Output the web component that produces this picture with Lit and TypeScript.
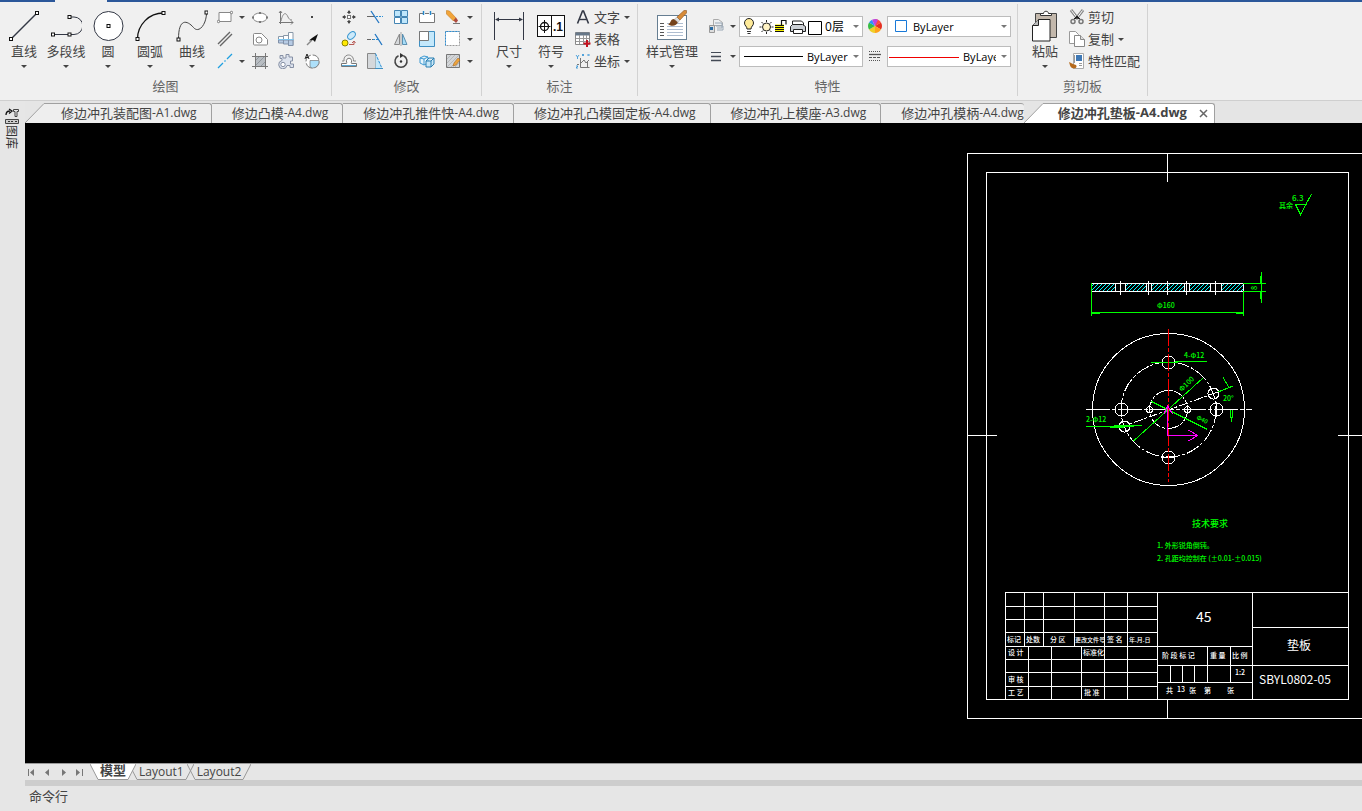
import { LitElement, html, svg, css, SVGTemplateResult, TemplateResult } from "lit";
import { customElement, property, state } from "lit/decorators.js";
import { classMap } from "lit/directives/class-map.js";

const INK = "#333845";
const node = (x: number, y: number) =>
  svg`<rect x=${x - 1.5} y=${y - 1.5} width="3" height="3" fill="#fff" stroke="#111" stroke-width="1" />`;

/* 32 x 32 glyphs of the large buttons */
const LARGE: Record<string, SVGTemplateResult> = {
  line: svg`<path d="M3.5 28.5L29.5 2.5" stroke=${INK} stroke-width="1.5" />${node(3, 29)}${node(29, 3)}`,
  polyline: svg`<path d="M3 24h17M20 6.500h4a8.500 8.500 0 0 1 0 17.500h-4" transform="translate(0 .5)" stroke=${INK} />${node(3, 24.5)}${node(19.5, 24.5)}${node(19.5, 7)}`,
  circle: svg`<circle cx="16.500" cy="16" r="14.500" fill="#fff" stroke=${INK} />${node(16.5, 16)}`,
  arc: svg`<path d="M3.500 29A26 26 0 0 1 29.500 3" stroke="#111" stroke-width="1.3" />${node(3.5, 29)}${node(29.5, 3)}`,
  curve: svg`<path d="M2.500 29C2.500 8 11 10 17.500 17.500C23 24 30.500 14 30.500 3" stroke="#444" />${node(2.5, 29.500)}${node(30.5, 2.5)}`,
  dimension: svg`<path d="M1.500 2v28M30.500 2v28M3 9.500h26" stroke=${INK} /><path d="M2 9.500l4-2v4zM30 9.500l-4-2v4z" fill=${INK} />`,
  symbol: svg`<rect x="2.500" y="5.500" width="27" height="21" fill="#fff" stroke="#111" /><path d="M16.500 5v22M3.500 16.500h12M9.500 10v13" stroke="#111" /><circle cx="9.500" cy="16.500" r="4" stroke="#111" stroke-width="1.3" /><text x="18" y="21" class="glyph">.1</text>`,
  style: svg`<rect x="1.500" y="5.500" width="29" height="24" fill="#fff" stroke="#667e92" /><path d="M4 13.500h4M4 16.500h4M4 19.500h4M4 22.500h4M4 25.500h4" stroke="#555" /><path d="M11 13.500h16M11 16.500h16M11 19.500h16M11 22.500h16M11 25.500h16" stroke="#aebdd0" /><path d="M12 14c3 0 2-5 6-5l4 3c-1 4-7 5-10 2z" fill="#74421b" /><path d="M18.500 9l2.500-2 3 3-2 2.500z" fill="#ddd" stroke="#888" stroke-width=".4" /><path d="M21 7l7-6.500h2.500v2.500l-6.500 7z" fill="#d78b38" stroke="#8c5422" stroke-width=".6" />`,
  paste: svg`<path d="M6.500 3.500h21v24h-21z" fill="#c3b8ac" stroke="#444" /><path d="M11.500 5.500v-2h3c0-3 5-3 5 0h3v2z" fill="#fff" stroke="#333" /><path d="M3.500 15.500l6-6h11.500v21.500h-17.500z" fill="#fff" stroke="#222" /><path d="M3.500 15.500h6v-6" fill="#bbb" stroke="#222" />`,
};

/* 16 x 16 glyphs */
const SMALL: Record<string, SVGTemplateResult> = {
  rect: svg`<path d="M2 3.500h12v9h-12z" fill="#fff" stroke="#888" /><circle cx="1.500" cy="12.500" r="1.200" fill="#fff" stroke="#777" /><circle cx="14.500" cy="3.500" r="1.200" fill="#fff" stroke="#777" />`,
  ellipse: svg`<ellipse cx="8" cy="8.500" rx="7" ry="4.500" fill="#fff" stroke="#888" /><path d="M7 3h2v2h-2zM7 12h2v2h-2zM0 7.500h2v2h-2zM14 7.500h2v2h-2z" fill="#777" />`,
  plot: svg`<path d="M2.500 2v13M1 13.500h14M13 11.500l2 2-2 2M1 4l1.500-2L4 4" stroke="#777" /><path d="M3 12c2-9 5-9 7-4 1 2 2 3 4 3" stroke="#888" />`,
  point: svg`<rect x="7" y="7" width="2" height="2" fill="#444" />`,
  double: svg`<path d="M1 13L13 1M3 15L15 3" stroke="#666" stroke-width="1.400" />`,
  hole: svg`<path d="M1.500 3.500q0-1 1-1h7l6 6v4.500q0 1-1 1h-12q-1 0-1-1z" fill="#fff" stroke="#888" /><circle cx="7" cy="9" r="3" stroke="#888" />`,
  screw: svg`<path d="M.500 5.500h5v6h-5zM5.500 4.500h5v8h-5zM10.500 1.500h4.500v13h-4.500z" fill="#fff" stroke="#8998a8" /><path d="M.500 9h5v3h-5zM5.500 9h5v4h-5zM10.500 9h4.500v5.500h-4.500z" fill="#b7cbe4" stroke="#8090a8" /><path d="M0 8.500h16" stroke="#7cc4ee" />`,
  arrow: svg`<path d="M3 14l5-5" stroke="#888" stroke-width="1.500" /><path d="M14 3l-3 8-2-2-4 .500 3-2.500z" fill="#111" />`,
  center: svg`<path d="M1 15l5-5M7.500 8.500l1-1M10 6l5-5" stroke="#1e9fe0" stroke-width="1.300" />`,
  hatch: svg`<path d="M3 3h11v11h-11z" fill="#b8bdc2" /><path d="M3 8l5-5M3 13l10-10M8 14l6-6" stroke="#92989e" /><path d="M3.500 0v16M13.500 0v16M0 3.500h16M0 13.500h16" stroke="#777" />`,
  parts: svg`<path d="M2 2.500h3v2.500h3v-3.500h3v2.500h3.500v4h-2v3h3v3.500h-3.500v-2h-3a4.200 4.200 0 1 1-5-5v-2h-2z" fill="#dde3ee" stroke="#8690a5" /><circle cx="5" cy="11.500" r="2.200" fill="#fff" stroke="#8690a5" />`,
  region: svg`<circle cx="8.500" cy="8.500" r="6.500" fill="#fff" stroke="#777" stroke-dasharray="8 2" /><path d="M6 7.500h9a6.500 6.500 0 0 1-6.500 7.500q-2.500 0-2.500-2z" fill="#ade0fa" stroke="#777" stroke-width=".7" /><path d="M1 6l2-5 2 5M2 4.500h2" stroke="#222" />`,
  move: svg`<path d="M8 2v3M8 11v3M2 8h3M11 8h3" stroke="#555" stroke-width="1.300" /><path d="M8 1l2 3h-4zM8 15l2-3h-4zM1 8l3-2v4zM15 8l-3-2v4z" fill="#444" /><rect x="6.500" y="6.500" width="3" height="3" fill="#fff" stroke="#777" />`,
  trim: svg`<path d="M0 7.500h8" stroke="#666" /><path d="M9 7.500h7" stroke="#2a8fd6" stroke-dasharray="2 1" /><path d="M4 2l8 12" stroke="#2075c2" stroke-width="1.300" />`,
  array: svg`<path d="M1.500 1.500h6v6h-6zM8.500 1.500h6v6h-6zM8.500 8.500h6v6h-6z" fill="#bfe6fb" stroke="#4485b3" /><path d="M1.500 8.500h6v6h-6z" fill="#fff" stroke="#4485b3" />`,
  breaks: svg`<path d="M4 4.500h-3.500v9h15v-9h-3M6 4.500h4" fill="#fff" stroke="#777" /><path d="M4.500 2v4M11.500 2v4" stroke="#2287cc" stroke-width="1.400" />`,
  pencil: svg`<path d="M1.500 1.500l3 .5 6.500 7-2.500 3-7-7z" fill="#f2a53a" stroke="#c57b1c" stroke-width=".6" /><path d="M8.500 11.500l2.500-3 2 3-2 2.500z" fill="#ad4b3f" /><path d="M8 14.500h7" stroke="#777" />`,
  copyobj: svg`<circle cx="4" cy="12" r="3" fill="#ffe900" stroke="#8d8200" /><ellipse cx="10.500" cy="4.500" rx="4.500" ry="3" transform="rotate(-45 10.500 4.500)" fill="#cdeafa" stroke="#3f9ad2" /><path d="M8 13.500h5v-3M11 12l2-2 1.500 2" stroke="#b75b56" />`,
  extend: svg`<path d="M0 8.500h6" stroke="#666" stroke-dasharray="4 1" /><path d="M6 8.500h5" stroke="#2a8fd6" stroke-dasharray="2 1" /><path d="M8 3l7 11" stroke="#2075c2" stroke-width="1.300" />`,
  mirror: svg`<path d="M6.500 3v10.500h-5z" fill="#d6d9dc" stroke="#888" /><path d="M9.500 3v10.500h4.500z" fill="#a6dcf8" stroke="#5a8fb0" /><path d="M8 1v14" stroke="#777" stroke-width=".6" />`,
  scale: svg`<path d="M.500.500h15v15h-15z" fill="#c4e8fb" stroke="#3f8fc2" /><path d="M.500 .500h9v9h-9z" fill="#fff" stroke="#777" />`,
  stretch: svg`<path d="M.500.500h14v14h-14z" fill="#fff" stroke="#999" stroke-dasharray="2 1" /><path d="M.500 14.500v-14h14" stroke="#2a8fd6" stroke-dasharray="2 1" />`,
  offset: svg`<path d="M.500 10.500h4.500c1 0 1-.500.500-1.500-1-5 6-5 5 0-.5 1-.5 1.500.500 1.500h4.500v3h-15z" fill="#fff" stroke="#777" /><path d="M1 8h2c-1-8 10-8 9.500 0h2.500" stroke="#888" /><path d="M1 12.500h14" stroke="#5aa8d6" />`,
  chamfer: svg`<path d="M.500.500h8v15h-8z" fill="#d5d8db" stroke="#888" /><path d="M8.500.500l6 15h-6z" fill="#c3e7fa" /><path d="M8.500 .500l6.500 15" stroke="#2a8fd6" stroke-dasharray="3 1" /><path d="M8 15.500h8" stroke="#3f8fc2" />`,
  rotate: svg`<path d="M5.500 2.800a6 6 0 1 0 5 0" stroke="#444" stroke-width="1.500" /><path d="M7 0v5l4-2.500z" fill="#333" /><circle cx="8" cy="8.500" r="1.200" fill="#333" />`,
  explode: svg`<path d="M1 5l4-2 4 1v6l-4 2-4-2zM1 5l4 1 4-2M5 6v6" fill="#e7f5fc" stroke="#3f9ad2" /><path d="M7 8l3-3h5v6l-3 3h-5zM7 8h5l3-3M12 8v6" fill="#c8e8f8" stroke="#2a7fb2" />`,
  edithatch: svg`<path d="M1.500 1.500h13v13h-13z" fill="#d3d6d9" stroke="#777" /><path d="M2 6l4-4M2 10l8-8M2 14l12-12M6 14l8-8M10 14l4-4" stroke="#aaa" stroke-width=".7" /><path d="M8 13l1-3 4-5 2 2-4 5z" fill="#eda43d" stroke="#a76a24" stroke-width=".6" />`,
  text: svg`<path d="M2.500 14.500L7.500 2h1l5 12.500" stroke="#333845" stroke-width="1.600" /><path d="M4.500 10.500h7" stroke="#333845" stroke-width="1.400" />`,
  table: svg`<path d="M.500 1.500h14v12h-14z" fill="#fff" stroke="#888" /><path d="M.500 1.500h14v3h-14z" fill="#667788" /><path d="M1 7.500h13M1 10.500h13M4.500 4v9M8.500 4v9M11.500 4v9" stroke="#999" /><path d="M12 9v7M8.500 12.500h7" stroke="#c4121f" stroke-width="2" />`,
  coord: svg`<path d="M5.500 5v9.500h9M2 11.500h2M6 10l3-3 2 3 3-3M12.500 8v6" stroke="#777" /><path d="M1 2l1.500 2L4 2M2.500 4v2M7 1l2 2M9 1l-2 2M12.500 1l2 2M14.500 1l-2 2M1 13h2l-2 2h2" stroke="#2a8fd6" stroke-width=".8" />`,
  convert: svg`<path d="M5.500 5v-3.500h5l4 3v3h-9z" fill="#eceff2" stroke="#aaa" /><path d="M7 5h7v5h-5M8 8h7v4h-6" stroke="#9aa8b6" /><path d="M1.500 7.500h5v7h-5z" fill="#ddd" stroke="#999" /><path d="M2 9h3v3h-3z" fill="#286aa3" />`,
  weight: svg`<path d="M3 4.500h10" stroke="#444a55" /><path d="M3 8.500h10M3 12.500h10" stroke="#444a55" stroke-width="1.500" />`,
  wheel: svg`<path d="M8 8V1a7 7 0 0 1 6 3.500z" fill="#ff4a42" /><path d="M8 8l6-3.500a7 7 0 0 1 0 7z" fill="#e53123" /><path d="M8 8l6 3.500a7 7 0 0 1-6 3.500z" fill="#ffa21b" /><path d="M8 8v7a7 7 0 0 1-6-3.500z" fill="#f0cf27" /><path d="M8 8l-6 3.500a7 7 0 0 1 0-7z" fill="#38bd45" /><path d="M8 8L2 4.500A7 7 0 0 1 5 1.700z" fill="#2d8fff" /><path d="M8 8L5 1.700A7 7 0 0 1 11 1.700z" fill="#bc48e0" />`,
  linetype: svg`<path d="M2 3.500h12M2 12.500h12" stroke="#555" stroke-dasharray="1 1" /><path d="M2 6.500h12" stroke="#555" stroke-width="1.300" /><path d="M2 9.500h12" stroke="#555" stroke-dasharray="3 1" />`,
  cut: svg`<path d="M2 1l7 9M14 1l-7 9" stroke="#888" stroke-width="3" /><path d="M2.500 1.500l6 8M13.500 1.500l-6 8" stroke="#fff" /><path d="M8 7l3 3-3-1-3 1z" fill="#222" stroke="#222" /><circle cx="4" cy="12.500" r="2" stroke="#777" stroke-width="1.500" /><circle cx="12" cy="12.500" r="2" stroke="#777" stroke-width="1.500" />`,
  copy: svg`<path d="M.500.500h6l3 3v9h-9z" fill="#fff" stroke="#999" /><path d="M5.500 4.500h6l4 4v7h-10z" fill="#fff" stroke="#888" /><path d="M11.500 4.500v4h4" stroke="#888" fill="#ddd" />`,
  match: svg`<path d="M4.500.500h10v15h-10z" fill="#fff" stroke="#aaa" /><path d="M7 2h6v6h-6z" fill="#3f78b5" /><path d="M5.500 2v8M10 10.500h3M10 12.500h3" stroke="#999" /><path d="M0 9l4 2 3 1c2 3-2 4-4 3-2-1-2-3-3-6z" fill="#b56a1d" />`,
};

const small = (name: string) => html`<svg class="i16" viewBox="0 0 16 16" fill="none" aria-hidden="true">${SMALL[name]}</svg>`;
const caret = html`<span class="caret"></span>`;

const DRAW_TOOLS = [["rect", "矩形", 1], ["ellipse", "椭圆"], ["plot", "函数曲线"], ["point", "点"], ["double", "平行线"], ["hole", "孔"], ["screw", "螺纹"], ["arrow", "箭头"], ["center", "中心线", 1], ["hatch", "填充"], ["parts", "零件"], ["region", "局部视图"]];
const EDIT_TOOLS = [["move", "移动"], ["trim", "修剪"], ["array", "阵列"], ["breaks", "打断"], ["pencil", "删除", 1], ["copyobj", "复制"], ["extend", "延伸"], ["mirror", "镜像"], ["scale", "缩放"], ["stretch", "拉伸", 1], ["offset", "偏移"], ["chamfer", "倒角"], ["rotate", "旋转"], ["explode", "分解"], ["edithatch", "编辑填充", 1]];

@customElement("cad-ribbon")
class CadRibbon extends LitElement {
  static styles = css`
    :host { display: block; background: #f0f0f0; border-bottom: 1px solid #cfcfcf; color: #444; font: 13px/20px "Noto Sans CJK SC", "Noto Sans", sans-serif; }
    .strip { display: grid; grid-template-columns: 55px 52px 1fr; height: 2px; }
    .strip span { background: #2b579a; }
    .strip .open { background: #f0f0f0; }
    .groups { display: flex; padding: 2px 0 4px; }
    .group { display: flex; flex-direction: column; justify-content: space-between; height: 92px; border-right: 1px solid #d2d2d2; white-space: nowrap; }
    .body { display: flex; padding: 2px 6px 0; height: 66px; }
    .group:first-child .body { padding-left: 3px; }
    .title { margin: 0; text-align: center; color: #666; }
    button { display: block; border: 0; padding: 0; margin: 0; background: none; color: inherit; font: inherit; }
    svg { display: block; flex: none; }
    .i16 { width: 16px; height: 16px; }
    .i32 { width: 32px; height: 32px; }
    .glyph { font: bold 12px "Liberation Sans", sans-serif; fill: #111; }
    .big { width: 42px; display: flex; flex-direction: column; align-items: center; padding-top: 4px; line-height: 18px; }
    .big .caret { margin-top: 5px; }
    .wide { width: 56px; }
    .caret { flex: none; width: 0; height: 0; border: 3px solid transparent; border-top-color: #444; border-bottom: 0; }
    .tools { display: grid; grid-template-rows: repeat(3, 22px); align-items: center; }
    .draw { grid-template-columns: 35px 26px 26px 21px; padding-left: 4px; }
    .edit { grid-template-columns: 26px 26px 26px 26px 30px; padding-left: 3px; }
    .tool { display: flex; align-items: center; gap: 6px; }
    .list { display: grid; grid-template-rows: repeat(3, 22px); align-items: center; padding: 0 1px 0 3px; }
    .list .tool { gap: 3px; }
    .list .caret { margin-left: 1px; }
    .props { display: grid; grid-template-columns: 31px 124px 24px 124px; grid-template-rows: 30px 30px; align-items: center; padding: 5px 0 0 8px; }
    .props .mid { justify-self: center; }
    .combo { position: relative; display: block; height: 21px; }
    .combo select { appearance: none; display: block; box-sizing: border-box; width: 100%; height: 100%; border: 1px solid #bcbcbc; border-radius: 0; background: #fff; color: #000; font: 11px "Open Sans", "Noto Sans CJK SC", sans-serif; margin: 0; padding: 0 14px 0 0; }
    .combo svg { position: absolute; inset: 0 auto 0 0; height: 21px; pointer-events: none; }
    .combo .caret { position: absolute; right: 4px; top: 9px; border-top-color: #777; pointer-events: none; }
    .combo .layer { padding-left: 85px; font-size: 12px; }
    .combo .color { padding-left: 25px; }
    .combo .width { padding-left: 67px; }
    .combo .type { padding-left: 75px; }
  `;

  big(icon: string, label: string, wide = false) {
    return html`<button class=${classMap({ big: true, wide })}>
      <svg class="i32" viewBox="0 0 32 32" fill="none" aria-hidden="true">${LARGE[icon]}</svg>${label}${caret}
    </button>`;
  }
  tool([icon, label, menu]: any[]) {
    return html`<button class="tool" aria-label=${label}>${small(icon)}${menu ? caret : ""}</button>`;
  }
  item(icon: string, label: string, menu = false) {
    return html`<button class="tool">${small(icon)}${label}${menu ? caret : ""}</button>`;
  }
  group(title: string, body: TemplateResult) {
    return html`<section class="group"><div class="body">${body}</div><p class="title">${title}</p></section>`;
  }
  combo(kind: string, label: string, value: string, art: SVGTemplateResult) {
    return html`<label class="combo"><select class=${kind} aria-label=${label}><option>${value}</option></select>
      <svg width="106" height="21" fill="none" aria-hidden="true">${art}</svg>${caret}</label>`;
  }

  render() {
    return html`
      <div class="strip"><span></span><span class="open"></span><span></span></div>
      <div class="groups">
        ${this.group("绘图", html`
          ${[["line", "直线"], ["polyline", "多段线"], ["circle", "圆"], ["arc", "圆弧"], ["curve", "曲线"]].map(([i, l]) => this.big(i, l))}
          <div class="tools draw">${DRAW_TOOLS.map((t) => this.tool(t))}</div>`)}
        ${this.group("修改", html`<div class="tools edit">${EDIT_TOOLS.map((t) => this.tool(t))}</div>`)}
        ${this.group("标注", html`
          ${this.big("dimension", "尺寸")}${this.big("symbol", "符号")}
          <div class="list">${this.item("text", "文字", true)}${this.item("table", "表格")}${this.item("coord", "坐标", true)}</div>`)}
        ${this.group("特性", html`
          ${this.big("style", "样式管理", true)}
          <div class="props">
            <button class="tool" aria-label="图层">${small("convert")}${caret}</button>
            ${this.combo("layer", "图层", "0层", svg`
              <path d="M8 13c0-3-2.500-3-2.500-6a4.500 4.500 0 0 1 9 0c0 3-2.500 3-2.500 6z" fill="#ffeb9a" stroke="#222" /><path d="M8 15.500h4M8.500 17.500h3" stroke="#333" />
              <circle cx="27.500" cy="11" r="4" fill="#fff3c4" stroke="#222" /><path d="M27.500 4v2M27.500 16v2M20.500 11h2M32.500 11h2M22.500 6l1.500 1.500M31 14.500l1.500 1.500M22.500 16l1.500-1.500M31 7.500l1.500-1.500" stroke="#222" />
              <path d="M36 8.500h9v7h-9z" fill="#f5ef00" /><path d="M36 9.500h9M36 11.500h9M36 13.500h9M36 15.500h9M42.500 9v-4.500h4.500v4" stroke="#111" stroke-width="1.200" />
              <path d="M53.500 10v-5h9l2 2v3" fill="#fff" stroke="#222" /><path d="M53.500 8.500h10l3 2v5h-15v-5z" fill="#ccd0d5" stroke="#222" /><path d="M54.500 13.500h9v4h-9z" fill="#fff" stroke="#222" />
              <path d="M69.500 5.500h13v13h-13z" fill="#fff" stroke="#000" />`)}
            <span class="mid">${small("wheel")}</span>
            ${this.combo("color", "颜色", "ByLayer", svg`<path d="M8.500 4.500h11v11h-11z" fill="#fff" stroke="#1879d8" />`)}
            <button class="tool" aria-label="线宽">${small("weight")}${caret}</button>
            ${this.combo("width", "线宽", "ByLayer", svg`<path d="M5 10.500h59" stroke="#000" />`)}
            <span class="mid">${small("linetype")}</span>
            ${this.combo("type", "线型", "ByLayer", svg`<path d="M2 11.500h70" stroke="#f00000" />`)}
          </div>`)}
        ${this.group("剪切板", html`
          ${this.big("paste", "粘贴")}
          <div class="list">${this.item("cut", "剪切")}${this.item("copy", "复制", true)}${this.item("match", "特性匹配")}</div>`)}
      </div>`;
  }
}

@customElement("document-tabs")
class DocumentTabs extends LitElement {
  @property({ type: Array }) names: string[] = [];
  @property({ type: Number }) current = 0;
  static styles = css`
    :host { display: flex; height: 20px; padding: 2px 0 0; background: #e5e5e5; font: 13px/17px "Noto Sans CJK SC", sans-serif; color: #444; }
    .tab { display: flex; box-sizing: border-box; height: 20px; border: 0; border-top: 1px solid #a0a0a0; border-right: 1px solid #a0a0a0; border-top-right-radius: 3px; background: #eee; padding: 0 14px 0 20px; margin: 0; font: inherit; color: inherit; white-space: nowrap; }
    .ext { font-family: "Open Sans", sans-serif; font-size: 12px; }
    .slant { display: block; flex: none; width: 20px; height: 20px; }
    .first { padding-left: 16px; }
    .active { padding-left: 14px; padding-right: 5px; font-weight: bold; background: #fff; }
    .active .ext { font-size: 13px; }
    .tuck { border-right: 0; padding-right: 0; }
    .close { display: block; width: 11px; height: 11px; margin: 4px 0 0 11px; }
  `;
  slant(fill: string) {
    return html`<svg class="slant" viewBox="0 0 20 20"><path d="M0 20L19 .500H20V20Z" fill=${fill} /><path d="M0 20L19 .500h1" fill="none" stroke="#a0a0a0" /></svg>`;
  }
  render() {
    return this.names.map((name, i) => {
      const active = i === this.current;
      const cut = name.lastIndexOf("-");
      return html`${i === 0 || active ? this.slant(active ? "#fff" : "#eee") : ""}
        <button class=${classMap({ tab: true, first: i === 0, active, tuck: i + 1 === this.current })}>
          <span>${name.slice(0, cut)}</span><span class="ext">${name.slice(cut)}</span>
          ${active ? html`<svg class="close" viewBox="0 0 11 11"><path d="M2 2l7 7M9 2l-7 7" stroke="#666" stroke-width="1.500" /></svg>` : ""}
        </button>`;
    });
  }
}

const seg = (...s: number[][]) => s.map(([a, b, c, d]) => `M${a} ${b}L${c} ${d}`).join("");
const BLOCK = seg(
  [1005, 606.5, 1157, 606.5], [1005, 619.5, 1157, 619.5], [1005, 632.5, 1157, 632.5], [1005, 646.5, 1252, 646.5],
  [1005, 659.5, 1157, 659.5], [1005, 672.5, 1157, 672.5], [1005, 686.5, 1157, 686.5],
  [1024.5, 592, 1024.5, 646], [1043.5, 592, 1043.5, 646], [1074.5, 592, 1074.5, 646],
  [1104.5, 592, 1104.5, 699], [1127.5, 592, 1127.5, 699], [1157.5, 592, 1157.5, 699],
  [1028.5, 646, 1028.5, 699], [1051.5, 646, 1051.5, 699], [1081.5, 646, 1081.5, 699],
  [1252.5, 592, 1252.5, 699], [1157, 665.5, 1348, 665.5], [1157, 682.5, 1252, 682.5],
  [1207.5, 646, 1207.5, 682], [1230.5, 646, 1230.5, 682], [1170.5, 665, 1170.5, 682],
  [1182.5, 665, 1182.5, 682], [1194.5, 665, 1194.5, 682], [1252, 627.5, 1348, 627.5]);
const LABELS: [number, number, string][] = [
  [1007, 642, "标记"], [1026, 642, "处数"], [1050, 642, "分 区"], [1075, 642, "更改文件号"], [1107, 642, "签 名"], [1129, 642, "年.月.日"],
  [1008, 655, "设 计"], [1083, 655, "标准化"], [1008, 682, "审 核"], [1008, 695, "工 艺"], [1084, 695, "批 准"],
  [1162, 658, "阶 段 标 记"], [1210, 658, "重 量"], [1232, 658, "比 例"], [1235, 675, "1:2"],
  [1166, 693, "共"], [1177, 692, "13"], [1189, 693, "张"], [1204, 693, "第"], [1227, 693, "张"],
];
const HATCHED = [[1091, 24], [1125, 21], [1151, 33], [1189, 21], [1221, 22]];
/* 45° lines clipped to each cut region of the side view */
const hatchLines = HATCHED.map(([x, w]) => {
  let d = "";
  for (let k = -4; k < w; k += 4) {
    const from = Math.max(k, 1);
    const to = Math.min(k + 7, w);
    if (to > from) d += `M${x + from} ${291 - (from - k)}L${x + to} ${291 - (to - k)}`;
  }
  return d;
}).join("");

@customElement("cad-canvas")
class CadCanvas extends LitElement {
  static styles = css`
    :host { display: block; background: #000; overflow: hidden; min-height: 0; }
    svg { display: block; width: 100%; height: 100%; }
    .w { stroke: #fff; } .g { stroke: #0f0; } .m { stroke: #f0f; } .r { stroke: #f00; } .c { stroke: #0ff; }
    text { font: 500 7px "Noto Sans CJK SC", sans-serif; fill: #fff; }
    .gt { fill: #0f0; }
    .s6 { font-size: 6px; } .s8 { font-size: 8px; } .s9 { font-size: 9px; } .s12 { font-size: 12px; font-weight: 400; } .s14 { font-size: 14px; font-weight: 400; }
  `;
  render() {
    return html`<svg fill="none" role="img" aria-label="修边冲孔垫板">
      <g transform="translate(-25 -123)">
        <g class="w" shape-rendering="crispEdges">
          <path d="M2000 153.500H967.500V718.500H2000M986.500 172.500H1348.500V699.500H986.500ZM1167.500 153v29M1167.500 699v19M967 435.500h30M1338 435.500h30" />
          <path d="M1005.500 699V592.500H1348" /><path d=${BLOCK} />
          <path class="c" d=${hatchLines} />
          ${HATCHED.map(([x, w]) => svg`<rect x=${x + 0.5} y="283.500" width=${w} height="8" />`)}
          <path d="M1091 283.500h152M1091 291.500h152M1120.500 281v14M1148.500 281v14M1167.500 281v14M1186.500 281v14M1215.500 281v14" />
          <circle cx="1168.500" cy="409.500" r="76" />
          <circle cx="1168.500" cy="409.500" r="47.500" stroke-dasharray="14 2 3 2" />
          <circle cx="1168.500" cy="409.500" r="19" stroke-dasharray="12 2 3 2" />
          ${[[1168.5, 362.5, 6.5], [1168.5, 457.5, 6.5], [1121.5, 409.5, 6.5], [1216.5, 409.5, 6.5], [1149.5, 409.5, 3], [1187.5, 409.5, 3], [1213.5, 393.5, 5.5], [1124.5, 426.5, 5.5]].map(
            ([x, y, r]) => svg`<circle cx=${x} cy=${y} r=${r} />`)}
          <path d="M1086 409.500H1252" stroke-dasharray="24 2 4 2" />
          <path d="M1121.500 402v15M1216.500 402v15M1149.500 406v7M1187.500 406v7M1162 457.500h13" />
          <path d="M1119 428L1219 391.500" stroke-dasharray="9 2 3 2" />
        </g>
        <g class="g" shape-rendering="crispEdges">
          <path d="M1091.500 283v33M1243.500 291v25M1091 312.500h153M1092 313.500h8M1236 313.500h7M1243 283.500h23M1243 291.500h23M1261.500 272v31M1260.500 276v7M1260.500 292v7" />
          <path d="M1295 204.500h12M1295.500 204.500l5 10 11-20.500" />
          <path d="M1151 362.500h27M1175 361.500h32M1086 426.500h48M1114 425.500h28M1110 427.500h14" />
          <path d="M1203.500 377.500L1133.500 441M1151.500 401.500l56 28M1218 392l15-6M1223 377l6 11M1230.500 410v8M1231.500 417v5M1232.500 410v8" />
        </g>
        <path class="r" d="M1168.500 329V482" stroke-dasharray="17 2 4 2" shape-rendering="crispEdges" />
        <path class="m" d="M1167.500 406V435.500H1197M1164 414l3.500-8.500 5 8.500M1188.500 430l9 5.500-9 5.500" shape-rendering="crispEdges" />
        <text class="gt" x="1279" y="208">其余</text><text class="gt s8" x="1292" y="201">6.3</text>
        <text class="gt" x="1157" y="308">Φ160</text>
        <text class="gt" transform="translate(1257 290) rotate(-90)">8</text>
        <text class="gt" x="1184" y="358">4-Φ12</text><text class="gt" x="1086" y="422">2-Φ12</text>
        <text class="gt" transform="translate(1182 392) rotate(-45)">Φ100</text>
        <text class="gt s6" transform="translate(1196 419) rotate(25)">Φ40</text>
        <text class="gt" x="1223" y="401">20°</text>
        <text class="gt s9" x="1192" y="527">技术要求</text>
        <text class="gt" x="1157" y="548">1. 外形锐角倒钝。</text>
        <text class="gt" x="1157" y="561">2. 孔距均控制在 (±0.01-±0.015)</text>
        ${LABELS.map(([x, y, t]) => svg`<text class=${t.length === 5 ? "s6" : ""} x=${x} y=${y}>${t}</text>`)}
        <text class="s14" x="1196" y="622">45</text>
        <text class="s12" x="1287" y="650">垫板</text>
        <text class="s12" x="1259" y="684">SBYL0802-05</text>
      </g>
    </svg>`;
  }
}

@customElement("app-root")
class AppRoot extends LitElement {
  @state() docs = ["修边冲孔装配图-A1.dwg", "修边凸模-A4.dwg", "修边冲孔推件快-A4.dwg", "修边冲孔凸模固定板-A4.dwg", "修边冲孔上模座-A3.dwg", "修边冲孔模柄-A4.dwg", "修边冲孔垫板-A4.dwg"];
  static styles = css`
    :host { display: flex; flex-direction: column; height: 100vh; overflow: hidden; background: #e6e6e6; color: #444; font: 13px/20px "Noto Sans CJK SC", "Noto Sans", sans-serif; }
    .work { flex: 1; display: grid; grid-template-columns: 25px minmax(0, 1fr); min-height: 0; }
    .side { padding: 7px 0 0 5px; }
    .library { display: flex; flex-direction: column; align-items: center; width: 14px; border: 0; padding: 0; margin: 0; background: none; color: #333; font-family: inherit; font-size: 12px; line-height: 14px; }
    .library svg { display: block; width: 14px; height: 17px; }
    .library span { writing-mode: vertical-rl; text-orientation: sideways; }
    .main { display: flex; flex-direction: column; min-width: 0; }
    cad-canvas { flex: 1; }
    .layouts { display: flex; height: 17px; border-top: 1px solid #999; box-sizing: border-box; font: 12px/16px "Open Sans", "Noto Sans CJK SC", sans-serif; }
    .nav { display: flex; padding-left: 1px; }
    .nav button { width: 16px; padding: 0; border: 0; background: none; }
    .nav svg { display: block; width: 9px; height: 16px; }
    .sheet { display: flex; border: 0; padding: 0; margin: 0; background: none; font: inherit; color: inherit; }
    .sheet + .sheet { margin-left: -7px; }
    .sheet svg { display: block; width: 9px; height: 16px; }
    .sheet span { height: 15px; border-bottom: 1px solid #999; padding: 0 1px; }
    .current { position: relative; z-index: 1; }
    .current span { background: #fff; font-weight: bold; font-size: 13px; line-height: 13px; }
    .divider { height: 6px; background: #cdcdcd; }
    .command { height: 25px; line-height: 20px; padding-left: 4px; }
  `;
  sheet(name: string, current = false) {
    const fill = current ? "#fff" : "none";
    return html`<button class=${classMap({ sheet: true, current })}>
      <svg viewBox="0 0 9 16"><path d="M0 0L8 15.500H9V0Z" fill=${fill} /><path d="M0 0L8 15.500h1" fill="none" stroke="#999" /></svg><span>${name}</span><svg viewBox="0 0 9 16"><path d="M9 0L1 15.500H0V0Z" fill=${fill} /><path d="M9 0L1 15.500h-1" fill="none" stroke="#999" /></svg>
    </button>`;
  }
  render() {
    const nav = [["首页", "M2.500 5v7", "M8 5v7l-4-3.500z"], ["上一页", "", "M7 5v7l-4-3.500z"], ["下一页", "", "M4 5v7l4-3.500z"], ["末页", "M8.500 5v7", "M2 5v7l4-3.500z"]];
    return html`
      <cad-ribbon></cad-ribbon>
      <div class="work">
        <aside class="side">
          <button class="library"><svg viewBox="0 0 14 17" fill="none"><path d="M1 7c0-3 1-4 4-4M4 1l3 2-3 2.500" stroke="#111" stroke-width="1.300" /><path d="M8.500 1.500h5v2h-1.500v5h-2v-5h-1.500z" stroke="#444" /><path d="M.500 11.500h13v4h-13z" fill="#ccc" stroke="#444" /><path d="M3 13.500h2M6 13.500h2M10 13.500h2" stroke="#333" /></svg><span>图库</span></button>
        </aside>
        <main class="main">
          <document-tabs .names=${this.docs} .current=${6}></document-tabs>
          <cad-canvas></cad-canvas>
          <nav class="layouts">
            <div class="nav">${nav.map(([l, bar, tri]) => html`<button aria-label=${l}><svg viewBox="0 0 9 16"><path d=${bar} stroke="#777" /><path d=${tri} fill="#777" /></svg></button>`)}</div>
            ${this.sheet("模型", true)}${this.sheet("Layout1")}${this.sheet("Layout2")}
          </nav>
          <div class="divider"></div>
          <div class="command">命令行</div>
        </main>
      </div>`;
  }
}
